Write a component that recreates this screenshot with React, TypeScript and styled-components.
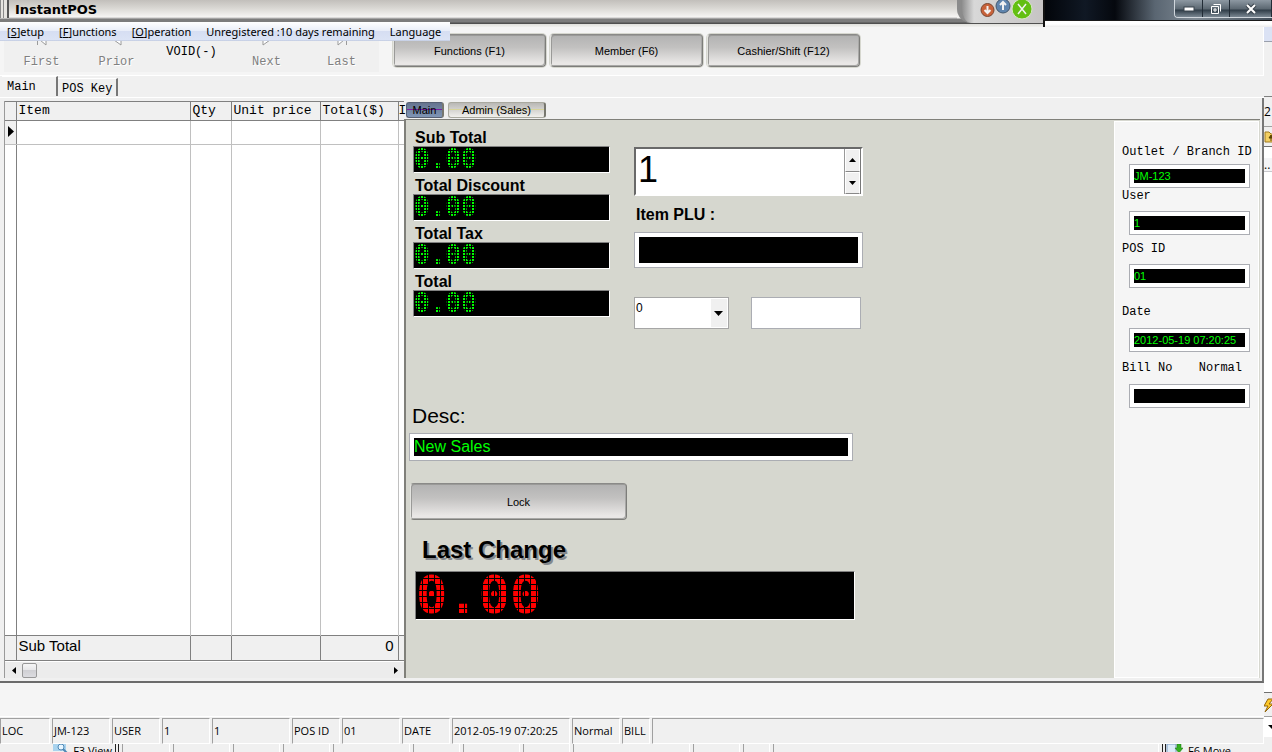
import React from "react";
import styled, { createGlobalStyle } from "styled-components";

const Global = createGlobalStyle`
  *, *::before, *::after { box-sizing: border-box; }
  html, body { margin: 0; padding: 0; overflow: hidden; background: #f0f0f0; }
  body { font-family: "Liberation Sans", Arial, sans-serif; font-size: 11px; color: #000; }
  button, input, select { font: inherit; color: inherit; margin: 0; border-radius: 0; }
`;

const mono = `"Liberation Mono", "Courier New", monospace`;
const ui = `"Open Sans", "Segoe UI", sans-serif`;

const Page = styled.div`
  height: 100vh;
  display: flex;
  flex-direction: column;
  overflow: hidden;
`;

/* ---------- title bar ---------- */
const TopBar = styled.header`
  position: relative;
  display: flex;
  height: 27px;
  flex: none;
`;
const TitleBar = styled.div`
  flex: 1;
  display: flex;
  border-right: 2px solid #111;
  background: linear-gradient(#d4d2ce 0, #f4f3f1 18px, #7c7c7c 19px, #7c7c7c 22px, #505050 23px, #505050 24px, #e0e0dc 24px, #f0f0ee 27px);
`;
const Grip = styled.span`
  width: 9px;
  height: 18px;
  border-left: 4px double #8a8a8a;
  border-right: 2px solid #555;
  background: #e6e4e0;
`;
const AppTitle = styled.h1`
  flex: 1;
  height: 19px;
  margin: 0;
  padding-left: 6px;
  font: bold 13px/19px "DejaVu Sans", Verdana, sans-serif;
  background: linear-gradient(#c2bfbb, #d9d7d3 8px, #f6f5f3 17px, #8a8a8a 19px);
`;
const OrbGroup = styled.div`
  width: 86px;
  height: 23px;
  display: flex;
  align-items: flex-start;
  padding-left: 18px;
  border-radius: 0 0 0 14px;
  border-left: 5px solid #8b8b8b;
  background: linear-gradient(90deg, #8e8e8e, #d8d8d8 12px, #c6c4c4);
`;
const Orb = styled.button`
  border: 0;
  padding: 0;
  background: none;
  height: 20px;
  display: flex;
  svg { display: block; }
`;
const DesktopEdge = styled.div`
  width: 227px;
  display: flex;
  justify-content: flex-end;
  align-items: flex-start;
  background: linear-gradient(#ffffff00 20px, #1a1a1a 20px, #1a1a1a 21px, #fff 21px, #fff 24px, #ececec 27px),
    linear-gradient(90deg, #02050a, #101824 40px, #05080e 70px, #5a6672 110px, #7e8993 150px, #414d59);
`;
const Caption = styled.div`
  display: flex;
  height: 18px;
  border: 1px solid #d0d6dc;
  border-top: 0;
  border-right: 0;
  border-radius: 0 0 0 4px;
  overflow: hidden;
`;
const CaptionButton = styled.button<{ $w: number }>`
  width: ${(p) => p.$w}px;
  padding: 0;
  border: 0;
  border-right: 1px solid #222c36;
  background: linear-gradient(#8d98a2, #5b6771 9px, #2f3c47 10px, #7a8792);
  display: flex;
  align-items: center;
  justify-content: center;
`;
const MenuBar = styled.nav`
  position: absolute;
  left: 0;
  top: 22px;
  z-index: 2;
  height: 19px;
  width: 450px;
  display: flex;
  gap: 15px;
  padding-left: 7px;
  font: 11px/19px "Noto Sans", "Segoe UI", sans-serif;
  white-space: nowrap;
  background: linear-gradient(#fff, #e8edf8 9px, #d6def2 9px, #dbe3f5 18px, #b6c0d8);
`;
const MenuItem = styled.button`
  border: 0;
  padding: 0;
  background: none;
  line-height: 19px;
`;

/* ---------- main frame ---------- */
const Body = styled.div`
  flex: 1;
  min-height: 0;
  display: flex;
`;
const Main = styled.main`
  flex: 1;
  min-width: 0;
  display: flex;
  flex-direction: column;
`;
const Toolbar = styled.div`
  height: 49px;
  flex: none;
  display: flex;
  padding-left: 4px;
  background: #f5f5f5;
  border-right: 1px solid #fff;
  border-bottom: 1px solid #fff;
`;
const NavGroup = styled.div`
  display: grid;
  grid-template-columns: repeat(5, 75px);
  height: 45px;
  background: #f0f0f0;
`;
const NavButton = styled.button<{ $raised?: boolean }>`
  border: 0;
  padding: ${(p) => (p.$raised ? "0 0 12px" : "0 0 2px")};
  background: none;
  display: flex;
  flex-direction: column;
  align-items: center;
  justify-content: flex-end;
  gap: 8px;
  font: 12px/16px ${mono};
  &:disabled { color: #808080; text-shadow: 1px 1px #fff; }
`;
const SkinButton = styled.button<{ $w: number; $h: number }>`
  width: ${(p) => p.$w}px;
  height: ${(p) => p.$h}px;
  padding: 0;
  border: 1px solid #7d7d7a;
  border-top-color: #8a8a88;
  border-left-color: #e4e4e0;
  border-radius: 4px;
  background: linear-gradient(#b2b2b2, #c2c1c0 40%, #e9e7e6 90%);
  box-shadow: inset 1px 1px #9a9a98, inset -1px -1px #a8a8a6, 0 0 0 1px #d6d7cf;
`;
const SkinGroup = styled.div`
  display: flex;
  gap: 4px;
  padding: 7px 0 0 14px;
`;
const TabStrip = styled.div`
  height: 22px;
  flex: none;
  display: flex;
  align-items: flex-end;
  padding: 0 0 1px 2px;
  border-bottom: 1px solid #fff;
  font: 12px/16px ${mono};
`;
const PageTab = styled.button<{ $active?: boolean }>`
  height: ${(p) => (p.$active ? 20 : 18)}px;
  width: ${(p) => (p.$active ? 56 : 60)}px;
  padding: ${(p) => (p.$active ? "1px 0 0 5px" : "2px 0 0 4px")};
  border: 0;
  border-top: 1px solid #fff;
  border-right: 2px solid #777;
  background: #f0f0f0;
  text-align: left;
`;
const Work = styled.section`
  flex: 1;
  min-height: 0;
  display: flex;
  padding: 3px 2px 3px 4px;
  border-right: 2px solid #777;
  border-bottom: 2px solid #6b6b6b;
`;

/* ---------- sales grid ---------- */
const GridPane = styled.div`
  width: 400px;
  display: grid;
  grid-template-rows: 1fr 17px;
  border-left: 1px solid #9a9a9a;
`;
const SalesTable = styled.table`
  width: 100%;
  height: 100%;
  table-layout: fixed;
  border-collapse: collapse;
  background: #fff;
  th, td { padding: 0 2px; text-align: left; font-weight: normal; white-space: nowrap; border-right: 1px solid #c0c0c0; }
  th:last-child, td:last-child { border-right: 0; padding: 0; }
  thead th { height: 19px; font: 13px/18px ${mono}; background: #f0f0f0; border: 1px solid #808080; border-left: 0; padding-right: 0; }
  tbody td { border-bottom: 1px solid #c0c0c0; }
  tbody td:first-child { border-right-color: #808080; background: #f0f0f0; padding: 0 1px; }
  tbody tr:last-child td { border-bottom: 0; background: #fff; }
  tfoot td { height: 25px; background: #f0f0f0; border: 1px solid #808080; border-left: 0; font-size: 15px; line-height: 20px; vertical-align: top; }
  tfoot td:nth-child(5) { text-align: right; padding-right: 4px; }
`;
const EntryRow = styled.tr`
  height: 24px;
`;
const ScrollTrack = styled.div`
  display: flex;
  align-items: center;
  background: #ececec;
  border-top: 1px solid #fff;
`;
const ScrollArrow = styled.button`
  width: 17px;
  height: 16px;
  border: 0;
  padding: 0;
  background: none;
  display: flex;
  align-items: center;
  justify-content: center;
`;
const ScrollThumb = styled.div`
  width: 15px;
  height: 15px;
  margin-right: auto;
  border: 1px solid #989898;
  border-radius: 2px;
  background: linear-gradient(#f6f6f6, #e6e6e8 50%, #d0d0d4 50%, #dcdce0);
`;

/* ---------- sale panel ---------- */
const SalePane = styled.div`
  flex: 1;
  min-width: 0;
  display: flex;
  flex-direction: column;
`;
const SaleTabs = styled.div`
  display: flex;
  gap: 4px;
  height: 18px;
  padding: 1px 0 0 2px;
`;
const SaleTab = styled.button<{ $active?: boolean }>`
  width: ${(p) => (p.$active ? 38 : 98)}px;
  height: 16px;
  padding: 0;
  line-height: 13px;
  border: 1px solid ${(p) => (p.$active ? "#566074" : "#a9a99f")};
  border-right: 2px solid #77776f;
  border-radius: 3px;
  background: ${(p) =>
    p.$active
      ? "linear-gradient(transparent 6px, #7a1fa0 6px, #7a1fa0 7px, transparent 7px), linear-gradient(#66748f, #7f95b5)"
      : "linear-gradient(transparent 6px, #d8d49a 6px, #d8d49a 7px, transparent 7px), linear-gradient(#b9b8b5, #f0efec)"};
`;
const SaleBody = styled.div`
  flex: 1;
  min-height: 0;
  display: flex;
  border-top: 1px solid #80807a;
  border-left: 2px solid #80807a;
  background: #d6d7cf;
`;
const SaleForm = styled.div`
  flex: 1;
  min-width: 0;
  padding: 10px 0 0 4px;
`;
const UpperForm = styled.div`
  display: flex;
  gap: 24px;
  height: 273px;
  padding-left: 3px;
`;
const Totals = styled.div`
  width: 197px;
`;
const BoldLabel = styled.label`
  display: block;
  font-weight: bold;
  font-size: 16px;
  line-height: 16px;
  padding-left: 2px;
`;
const Led = styled.output<{ $h: number; $size: number; $pitch: number; $color: string }>`
  display: block;
  position: relative;
  height: ${(p) => p.$h}px;
  border: 1px solid #fff;
  border-top-color: #808080;
  border-left-color: #808080;
  background: #000;
  color: ${(p) => p.$color};
  font: bold ${(p) => p.$size}px/${(p) => p.$h - 2}px "DejaVu Sans Mono", monospace;
  /* black lattice that breaks the digits into lamps */
  &::after {
    content: "";
    position: absolute;
    inset: 0;
    background:
      repeating-linear-gradient(90deg, #000 0, #000 1px, transparent 1px, transparent ${(p) => p.$pitch}px),
      repeating-linear-gradient(#000 0, #000 1px, transparent 1px, transparent ${(p) => p.$pitch}px);
  }
`;
const TotalLine = styled.div`
  margin-bottom: 5px;
`;
const Entry = styled.div`
  width: 229px;
  padding-top: 17px;
`;
const Spin = styled.div`
  display: flex;
  height: 49px;
  margin-bottom: 11px;
  border: 2px solid #696969;
  border-right-color: #fff;
  border-bottom-color: #fff;
  background: #fff;
`;
const SpinInput = styled.input`
  flex: 1;
  min-width: 0;
  border: 0;
  padding: 0 0 3px 2px;
  background: none;
  font-size: 36px;
`;
const SpinButtons = styled.div`
  display: flex;
  flex-direction: column;
  width: 17px;
  border-left: 1px solid #999;
  border-right: 1px solid #777;
  button {
    flex: 1;
    padding: 0;
    border: 1px solid #fff;
    border-bottom-color: #888;
    background: #f0f0f0;
    display: flex;
    align-items: center;
    justify-content: center;
  }
`;
const Field = styled.input<{ $h: number; $size?: number; $blank?: boolean }>`
  display: block;
  width: 100%;
  height: ${(p) => p.$h}px;
  padding: 4px;
  border: 1px solid #abadb3;
  background: ${(p) => (p.$blank ? "#fff" : "linear-gradient(#000, #000) content-box, #fff")};
  color: #00ff00;
  font-size: ${(p) => p.$size ?? 11}px;
`;
const PluBox = styled.div`
  padding-top: 9px;
`;
const PairRow = styled.div`
  display: flex;
  gap: 22px;
  padding: 29px 2px 0 0;
`;
const ComboBox = styled.div`
  position: relative;
  width: 95px;
  flex: none;
  svg {
    position: absolute;
    right: 2px;
    top: 2px;
    pointer-events: none;
  }
`;
const Combo = styled.select`
  appearance: none;
  width: 95px;
  height: 32px;
  padding: 0 20px 11px 1px;
  border: 1px solid #a6a6a6;
  background: #fff;
  font-size: 12px;
`;
const DescLabel = styled.label`
  display: block;
  padding: 0 0 4px 2px;
  font-size: 21px;
  line-height: 26px;
`;
const DescBox = styled.div`
  width: 444px;
  margin: 0 0 22px -1px;
`;
const ChangeLabel = styled.label`
  display: block;
  padding: 15px 0 6px 12px;
  font-weight: bold;
  font-size: 24px;
  line-height: 30px;
  text-shadow: 2px 2px #85888c;
`;
const ChangeBox = styled.div`
  width: 440px;
  margin-left: 5px;
`;

/* ---------- terminal info ---------- */
const Info = styled.aside`
  width: 145px;
  flex: none;
  padding: 22px 8px 0 7px;
  margin: 1px 1px 0 0;
  border: 1px solid #fff;
  background: #f5f5f5;
`;
const InfoItem = styled.div<{ $gap: number; $after: number }>`
  display: flex;
  flex-direction: column;
  align-items: flex-end;
  gap: ${(p) => p.$gap}px;
  margin-bottom: ${(p) => p.$after}px;
  input { width: 121px; }
`;
const InfoLabel = styled.label`
  width: 100%;
  display: flex;
  justify-content: space-between;
  padding-right: 8px;
  font: 12px/16px ${mono};
  white-space: nowrap;
`;

/* ---------- bottom bars ---------- */
const Spacer = styled.div`
  height: 34px;
  flex: none;
  background: #f5f5f5;
  border-bottom: 1px solid #fff;
`;
const StatusBar = styled.footer`
  height: 27px;
  flex: none;
  display: flex;
  gap: 2px;
  padding-top: 1px;
  font: 11px/24px ${ui};
  background: #f0f0f0;
`;
const StatusCell = styled.span<{ $w?: number }>`
  ${(p) => (p.$w ? `width: ${p.$w}px; flex: none;` : "flex: 1;")}
  height: 26px;
  padding-left: 1px;
  white-space: nowrap;
  border: 1px solid #fff;
  border-top-color: #a0a0a0;
  border-left-color: #a0a0a0;
`;
const BackRow = styled.div`
  height: 8px;
  flex: none;
  display: flex;
  gap: 3px;
  overflow: hidden;
  background: #f0f0f0;
  font: 11px/13px ${ui};
`;
const BackCell = styled.span<{ $w?: number }>`
  ${(p) => (p.$w ? `width: ${p.$w}px; flex: none;` : "flex: 1;")}
  border-left: 1px solid #a0a0a0;
  border-right: 1px solid #fff;
`;
const BackLabel = styled.span<{ $w: number; $bar?: boolean }>`
  width: ${(p) => p.$w}px;
  flex: none;
  display: flex;
  gap: 5px;
  padding-right: 3px;
  justify-content: ${(p) => (p.$bar ? "flex-start" : "flex-end")};
  border-left: ${(p) => (p.$bar ? "4px double #222" : "0")};
  border-right: ${(p) => (p.$bar ? "0" : "4px double #222")};
  white-space: nowrap;
`;

/* ---------- window behind, right edge ---------- */
const Edge = styled.div`
  width: 8px;
  flex: none;
  display: flex;
  flex-direction: column;
  overflow: hidden;
  background: #fff;
  font: 12px/16px ${ui};
`;
const EdgePart = styled.div<{ $h?: number; $bg: string; $line?: string }>`
  ${(p) => (p.$h ? `height: ${p.$h}px; flex: none;` : "flex: 1;")}
  background: ${(p) => p.$bg};
  border-bottom: 1px solid ${(p) => p.$line ?? p.$bg};
  display: flex;
  align-items: center;
  overflow: hidden;
  svg { flex: none; }
`;

const Tri = ({ d, w, h }: { d: string; w: number; h: number }) => (
  <svg width={w} height={h} viewBox={`0 0 ${w} ${h}`} aria-hidden="true">
    <path d={d} fill="currentColor" />
  </svg>
);

const NavGlyph = ({ d }: { d: string }) => (
  <svg width="12" height="12" viewBox="0 0 12 12" fill="#fff" stroke="#9a9a9a" aria-hidden="true">
    <path d={d} />
  </svg>
);

const OrbIcon = ({ size, cy, fill, rim, d }: { size: number; cy: number; fill: string; rim: string; d: string }) => (
  <svg width={size} height={20} viewBox={`0 0 ${size} 20`} fill="none" aria-hidden="true">
    <circle cx={size / 2} cy={cy} r={size / 2 - 1} fill={fill} stroke={rim} />
    <path d={d} stroke="#f2f2f2" strokeWidth={size > 20 ? 1.5 : 2} />
  </svg>
);

const totals = ["Sub Total", "Total Discount", "Total Tax", "Total"];
const status: [string, number][] = [
  ["LOC", 50], ["JM-123", 58], ["USER", 48], ["1", 48], ["1", 78], ["POS ID", 48],
  ["01", 58], ["DATE", 48], ["2012-05-19 07:20:25", 118], ["Normal", 48], ["BILL", 28],
];
const info = [
  { id: "outlet", label: "Outlet / Branch ID", value: "JM-123", gap: 4, after: 0 },
  { id: "user", label: "User", value: "1", gap: 7, after: 6 },
  { id: "pos", label: "POS ID", value: "01", gap: 7, after: 16 },
  { id: "date", label: "Date", value: "2012-05-19 07:20:25", gap: 8, after: 8 },
  { id: "bill", label: "Bill No", value: "", gap: 8, after: 0 },
];

export default function App() {
  return (
    <Page>
      <Global />
      <TopBar>
        <TitleBar>
          <Grip />
          <AppTitle>InstantPOS</AppTitle>
          <OrbGroup>
            <Orb aria-label="Minimise">
              <OrbIcon size={15} cy={10} fill="#c8623a" rim="#7c4630" d="M7.5 6v7M4.5 10l3 3 3-3" />
            </Orb>
            <Orb aria-label="Restore">
              <OrbIcon size={16} cy={6} fill="#5f84ad" rim="#44586e" d="M8 10V2M5 5l3-3 3 3" />
            </Orb>
            <Orb aria-label="Close">
              <OrbIcon size={22} cy={9} fill="#63bf12" rim="#d7e6c4" d="M7 4l8 10M15 4L7 14" />
            </Orb>
          </OrbGroup>
        </TitleBar>
        <DesktopEdge>
          <Caption>
            <CaptionButton $w={28} aria-label="Minimise window">
              <svg width="12" height="6" viewBox="0 0 12 6" aria-hidden="true">
                <rect x="1" y="1" width="10" height="4" fill="#fff" stroke="#39434c" />
              </svg>
            </CaptionButton>
            <CaptionButton $w={27} aria-label="Restore window">
              <svg width="12" height="12" viewBox="0 0 12 12" fill="none" stroke="#fff" aria-hidden="true">
                <path d="M3.5 1.5h7v7M1.5 3.5h7v7h-7z" />
                <path d="M4 6h2v2H4z" />
              </svg>
            </CaptionButton>
            <CaptionButton $w={42} aria-label="Close window">
              <svg width="14" height="12" viewBox="0 0 14 12" fill="none" aria-hidden="true">
                <path d="M3 2l8 8M11 2l-8 8" stroke="#39434c" strokeWidth="4" />
                <path d="M3 2l8 8M11 2l-8 8" stroke="#fff" strokeWidth="2" />
              </svg>
            </CaptionButton>
          </Caption>
        </DesktopEdge>
        <MenuBar>
          <MenuItem>[<u>S</u>]etup</MenuItem>
          <MenuItem>[<u>F</u>]unctions</MenuItem>
          <MenuItem>[<u>O</u>]peration</MenuItem>
          <MenuItem>Unregistered :10 days remaining</MenuItem>
          <MenuItem>Language</MenuItem>
        </MenuBar>
      </TopBar>

      <Body>
        <Main>
          <Toolbar>
            <NavGroup>
              <NavButton disabled><NavGlyph d="M1.5 1v10M10 1v10L4 6z" />First</NavButton>
              <NavButton disabled><NavGlyph d="M10 1v10L3 6z" />Prior</NavButton>
              <NavButton $raised>VOID(-)</NavButton>
              <NavButton disabled><NavGlyph d="M2 1v10l7-5z" />Next</NavButton>
              <NavButton disabled><NavGlyph d="M10.5 1v10M2 1v10l6-5z" />Last</NavButton>
            </NavGroup>
            <SkinGroup>
              <SkinButton $w={153} $h={33}>Functions (F1)</SkinButton>
              <SkinButton $w={153} $h={33}>Member (F6)</SkinButton>
              <SkinButton $w={153} $h={33}>Cashier/Shift (F12)</SkinButton>
            </SkinGroup>
          </Toolbar>
          <TabStrip>
            <PageTab $active>Main</PageTab>
            <PageTab>POS Key</PageTab>
          </TabStrip>

          <Work>
            <GridPane>
              <SalesTable>
                <colgroup>
                  <col style={{ width: 11 }} />
                  <col style={{ width: 174 }} />
                  <col style={{ width: 41 }} />
                  <col style={{ width: 89 }} />
                  <col style={{ width: 78 }} />
                  <col />
                </colgroup>
                <thead>
                  <tr>
                    <th /><th>Item</th><th>Qty</th><th>Unit price</th><th>Total($)</th><th>I</th>
                  </tr>
                </thead>
                <tbody>
                  <EntryRow>
                    <td><Tri w={8} h={11} d="M2 0l6 5.5-6 5.5z" /></td>
                    <td /><td /><td /><td /><td />
                  </EntryRow>
                  <tr><td /><td /><td /><td /><td /><td /></tr>
                </tbody>
                <tfoot>
                  <tr><td /><td>Sub Total</td><td /><td /><td>0</td><td /></tr>
                </tfoot>
              </SalesTable>
              <ScrollTrack>
                <ScrollArrow aria-label="Scroll left"><Tri w={4} h={7} d="M4 0v7L0 3.5z" /></ScrollArrow>
                <ScrollThumb />
                <ScrollArrow aria-label="Scroll right"><Tri w={4} h={7} d="M0 0v7l4-3.5z" /></ScrollArrow>
              </ScrollTrack>
            </GridPane>

            <SalePane>
              <SaleTabs>
                <SaleTab $active>Main</SaleTab>
                <SaleTab>Admin (Sales)</SaleTab>
              </SaleTabs>
              <SaleBody>
                <SaleForm>
                  <UpperForm>
                    <Totals>
                      {totals.map((t, i) => (
                        <TotalLine key={t}>
                          <BoldLabel htmlFor={`total-${i}`}>{t}</BoldLabel>
                          <Led id={`total-${i}`} $h={27} $size={26} $pitch={3} $color="#00ff00">0.00</Led>
                        </TotalLine>
                      ))}
                    </Totals>
                    <Entry>
                      <Spin>
                        <SpinInput aria-label="Quantity" defaultValue="1" />
                        <SpinButtons>
                          <button aria-label="Increase"><Tri w={7} h={4} d="M0 4h7L3.5 0z" /></button>
                          <button aria-label="Decrease"><Tri w={7} h={4} d="M0 0h7L3.5 4z" /></button>
                        </SpinButtons>
                      </Spin>
                      <BoldLabel htmlFor="plu">Item PLU :</BoldLabel>
                      <PluBox><Field id="plu" $h={36} $size={16} /></PluBox>
                      <PairRow>
                        <ComboBox>
                          <Combo aria-label="Price level"><option>0</option></Combo>
                          <svg width="16" height="28" viewBox="0 0 16 28" aria-hidden="true">
                            <rect width="16" height="28" fill="#f0f0f0" />
                            <path d="M3 12h9l-4.5 5z" />
                          </svg>
                        </ComboBox>
                        <Field aria-label="Amount" $h={32} $blank />
                      </PairRow>
                    </Entry>
                  </UpperForm>
                  <DescLabel htmlFor="desc">Desc:</DescLabel>
                  <DescBox><Field id="desc" $h={28} $size={16} defaultValue="New Sales" /></DescBox>
                  <SkinButton $w={217} $h={37}>Lock</SkinButton>
                  <ChangeLabel htmlFor="change">Last Change</ChangeLabel>
                  <ChangeBox>
                    <Led id="change" $h={49} $size={52} $pitch={6} $color="#ff0000">0.00</Led>
                  </ChangeBox>
                </SaleForm>
                <Info>
                  {info.map((f) => (
                    <InfoItem key={f.id} $gap={f.gap} $after={f.after}>
                      <InfoLabel htmlFor={f.id}>
                        {f.label}
                        {f.id === "bill" && <span>Normal</span>}
                      </InfoLabel>
                      <Field id={f.id} $h={24} defaultValue={f.value} />
                    </InfoItem>
                  ))}
                </Info>
              </SaleBody>
            </SalePane>
          </Work>

          <Spacer />
          <StatusBar>
            {status.map(([text, w], i) => (
              <StatusCell key={i} $w={w}>{text}</StatusCell>
            ))}
            <StatusCell />
          </StatusBar>
        </Main>

        <Edge>
          <EdgePart $h={15} $bg="#dbe2f4" $line="#9aa0ac" />
          <EdgePart $h={55} $bg="#f0f0f0" $line="#808080" />
          <EdgePart $h={30} $bg="#f0f0f0" $line="#a0a0a0">2</EdgePart>
          <EdgePart $h={20} $bg="#f0f0f0" $line="#707070">
            <svg width="14" height="12" viewBox="0 0 14 12" aria-hidden="true">
              <path d="M1 1h4l2 2h6v8H1z" fill="#f3cf63" stroke="#a07a20" />
              <path d="M7 10V6M5 7l2-3 2 3z" stroke="#5b4300" fill="#5b4300" />
            </svg>
          </EdgePart>
          <EdgePart $h={11} $bg="#fff" />
          <EdgePart $h={14} $bg="#f4f4f6" $line="#c8c8cc">..</EdgePart>
          <EdgePart $bg="#fff" $line="#707070" />
          <EdgePart $h={24} $bg="#f0f0f0" $line="#a0a0a0">
            <svg width="12" height="14" viewBox="0 0 12 14" aria-hidden="true">
              <path d="M4 1L0 8h4l-3 6 8-8H5l4-5z" fill="#ffc928" stroke="#936508" />
            </svg>
          </EdgePart>
          <EdgePart $h={20} $bg="#fff">
            <svg width="12" height="4" viewBox="0 0 12 4" aria-hidden="true"><path d="M4 0h8v4H8z" /></svg>
          </EdgePart>
          <EdgePart $h={7} $bg="#f0f0f0" />
        </Edge>
      </Body>

      <BackRow>
        <BackLabel $w={119}>
          <svg width="16" height="10" viewBox="0 0 16 10" aria-hidden="true">
            <path d="M1 0h13v7H1z" fill="#a9d3ee" />
            <circle cx="9" cy="3" r="3" fill="#e8f6ff" stroke="#4f88b5" />
            <path d="M11 5l4 4" stroke="#4f88b5" strokeWidth="2" />
          </svg>
          F3 View
        </BackLabel>
        <BackCell $w={48} />
        {[57, 47, 47, 77, 47, 57, 47, 117, 47, 27].map((w, i) => (
          <BackCell key={i} $w={w} />
        ))}
        <BackCell />
        <BackLabel $w={110} $bar>
          <svg width="17" height="10" viewBox="0 0 17 10" aria-hidden="true">
            <path d="M1 0h9v10H1z" fill="#dcebf8" stroke="#7d9cc0" />
            <path d="M11 0h4v4h2l-4 5-4-5h2z" fill="#35b020" stroke="#1b7410" strokeWidth="0.5" />
          </svg>
          F6 Move
        </BackLabel>
      </BackRow>
    </Page>
  );
}
